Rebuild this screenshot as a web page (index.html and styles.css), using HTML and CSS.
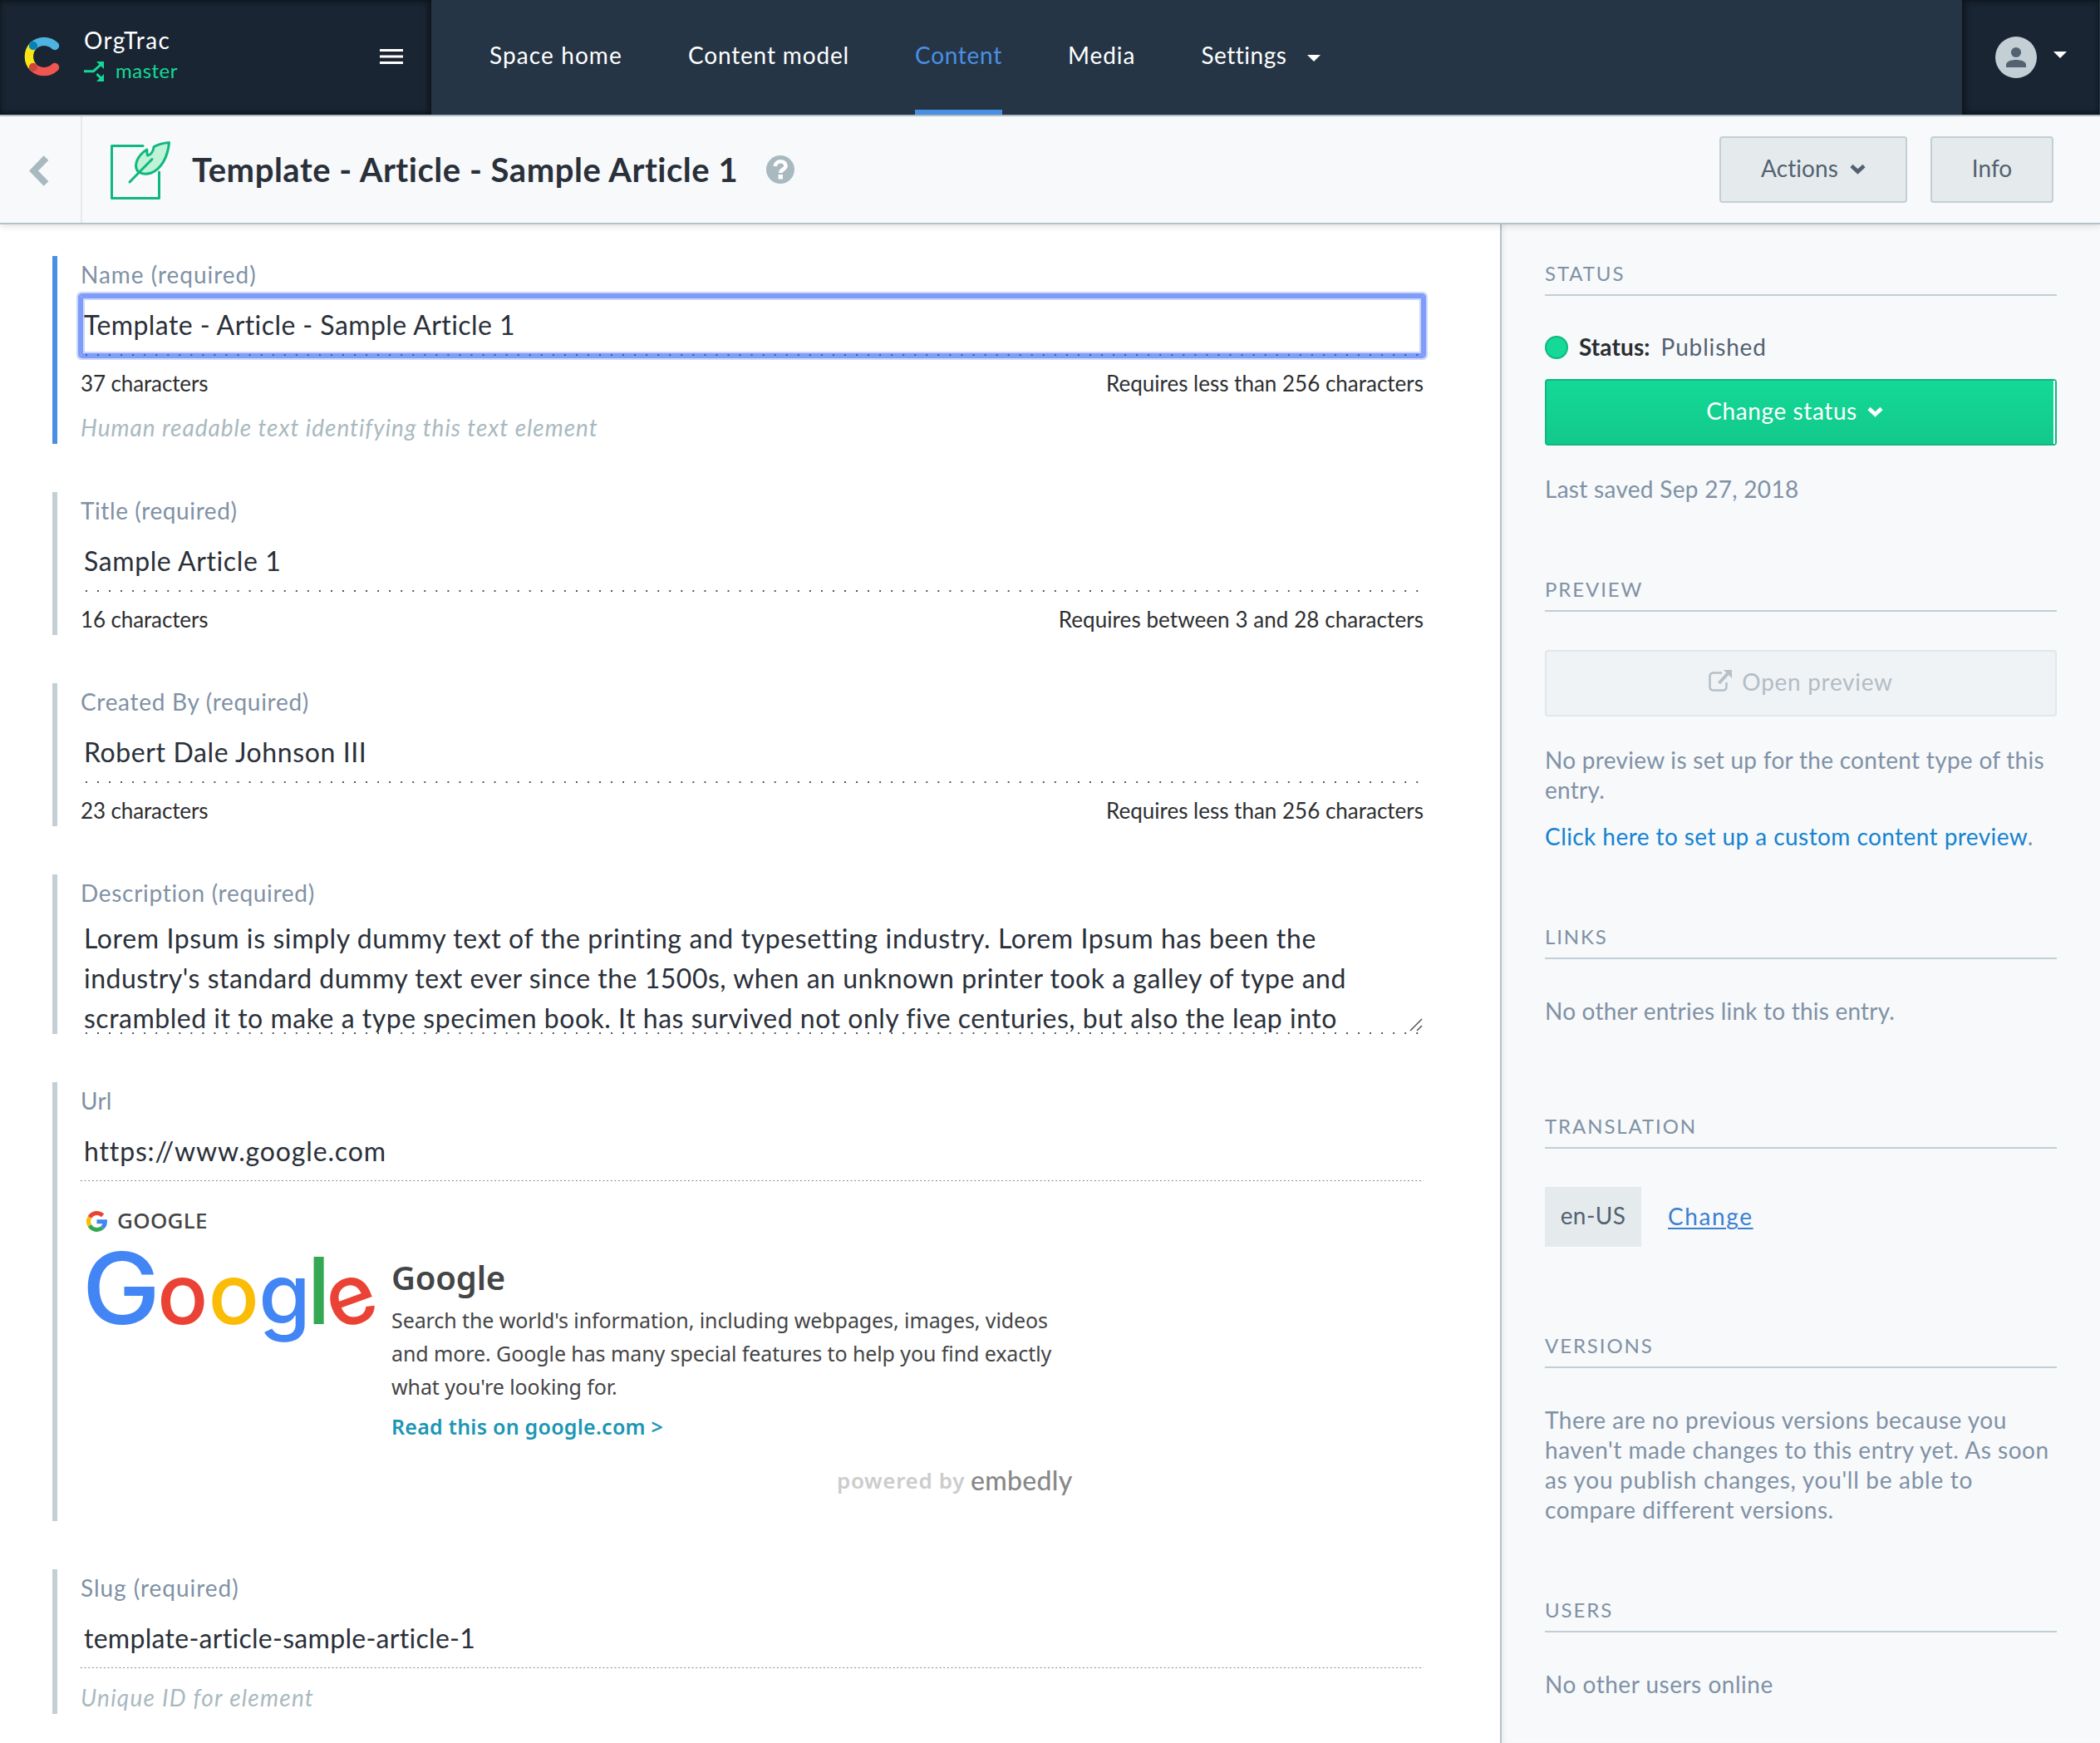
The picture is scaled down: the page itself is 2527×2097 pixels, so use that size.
FILE: index.html
```html
<!DOCTYPE html>
<html lang="en">
<head>
<meta charset="utf-8">
<title>Template - Article - Sample Article 1</title>
<link rel="stylesheet" href="styles.css">
</head>
<body>
<header class="topbar">
  <div class="brand">
    <svg class="brand-logo" width="46" height="52" viewBox="27 42 46 52" fill="none" stroke-width="10.4" stroke-linecap="round">
      <path d="M40 55A19 19 0 0 0 40 81" stroke="#fae51a"/>
      <path d="M40 55A19 19 0 0 1 66 55" stroke="#4fb3e2"/>
      <path d="M40 81A19 19 0 0 0 66 81" stroke="#f0564f"/>
      <circle cx="40" cy="55" r="5.1" fill="#0681b6"/>
      <circle cx="40" cy="81" r="5.1" fill="#cd4739"/>
    </svg>
    <div class="org">
      <div class="org-name">OrgTrac</div>
      <div class="org-env">
        <svg width="26" height="26" viewBox="100 73 26 26"><path d="M101 85.7H112.5L121 78M116.5 89L121.5 94" fill="none" stroke="#14d997" stroke-width="3"/><path d="M116 74H125V83ZM125 89V98H116Z" fill="#14d997"/></svg>
        <span>master</span>
      </div>
    </div>
    <svg class="burger" width="28" height="18" viewBox="0 0 28 18" fill="#fff"><path d="M0 0H28V3H0ZM0 7.5H28V10.5H0ZM0 15H28V18H0Z"/></svg>
  </div>
  <nav class="nav">
    <a class="nav-item ls-11">Space home</a>
    <a class="nav-item ls-09">Content model</a>
    <a class="nav-item nav-active ls-07">Content</a>
    <a class="nav-item ls-10">Media</a>
    <a class="nav-item ls-05">Settings<svg class="nav-caret" width="16" height="8" viewBox="0 0 16 8"><path d="M0 0H16L8 8Z" fill="#fff"/></svg></a>
  </nav>
  <div class="account">
    <svg width="50" height="50" viewBox="0 0 50 50"><circle cx="25" cy="25" r="25" fill="#c3cfd5"/><circle cx="25" cy="19" r="6.1" fill="#536171"/><path d="M13 37V34C13 30 19 28 25 28S37 30 37 34V37Z" fill="#536171"/></svg>
    <svg class="account-caret" width="16" height="8" viewBox="0 0 16 8"><path d="M0 0H16L8 8Z" fill="#fff"/></svg>
  </div>
</header>

<div class="titlebar">
  <div class="back"><svg width="26" height="40" viewBox="0 0 26 40"><path d="M20.5 4L5.5 19.500L20.5 35" fill="none" stroke="#a9b9c0" stroke-width="8" stroke-linejoin="miter"/></svg></div>
  <svg class="entry-icon" width="80" height="80" viewBox="130 165 80 80" fill="none" stroke="#0eb87f" stroke-width="3" stroke-linecap="round" stroke-linejoin="round">
    <path d="M172 175.5H134.5V238.5H191.5V207"/>
    <path d="M203.5 171.5C197 172 190 174 185.2 176.5C184.5 181 182 186.5 177.5 187C176.5 185 177 182 176.8 180C168 185 162 195 164 202.5C166 209 174 210.5 182 208C194 203 202 189 203.5 171.5Z" fill="#bff2d6"/>
    <path d="M156 219L183 191.5"/>
  </svg>
  <h1>Template - Article - Sample Article 1</h1>
  <svg class="help" width="34" height="34" viewBox="0 0 34 34"><circle cx="17" cy="17" r="17" fill="#a9b9c0"/><path d="M11 13C11 5.500 23.500 5.500 23.500 12.500C23.500 17 17.500 16.500 17.300 21" fill="none" stroke="#fff" stroke-width="4.600"/><path d="M14.600 23H20V28.500H14.600Z" fill="#fff"/></svg>
  <button class="btn btn-actions ls-01">Actions<svg width="19" height="13" viewBox="0 0 19 13"><path d="M2 2.500L9.500 9.500L17 2.500" fill="none" stroke="#536171" stroke-width="4.600"/></svg></button>
  <button class="btn btn-info">Info</button>
</div>

<div class="page">
  <main class="form">
    <section class="field field-active">
      <div class="label ls-10">Name (required)</div>
      <div class="input input-focus"><div class="value ls-04">Template - Article - Sample Article 1</div><div class="dots"></div></div>
      <div class="counter"><span class="ls-n1">37 characters</span><span>Requires less than 256 characters</span></div>
      <div class="hint ls-10">Human readable text identifying this text element</div>
    </section>
    <section class="field">
      <div class="label ls-06">Title (required)</div>
      <div class="input"><div class="value ls-06">Sample Article 1</div><div class="dots"></div></div>
      <div class="counter"><span class="ls-n1">16 characters</span><span class="ls-01">Requires between 3 and 28 characters</span></div>
    </section>
    <section class="field">
      <div class="label ls-07">Created By (required)</div>
      <div class="input"><div class="value ls-06">Robert Dale Johnson III</div><div class="dots"></div></div>
      <div class="counter"><span class="ls-n1">23 characters</span><span>Requires less than 256 characters</span></div>
    </section>
    <section class="field">
      <div class="label ls-07">Description (required)</div>
      <div class="textarea">
        <div class="textarea-body">
          <div class="ls-06">Lorem Ipsum is simply dummy text of the printing and typesetting industry. Lorem Ipsum has been the</div>
          <div class="ls-05">industry's standard dummy text ever since the 1500s, when an unknown printer took a galley of type and</div>
          <div class="ls-05">scrambled it to make a type specimen book. It has survived not only five centuries, but also the leap into</div>
        </div>
        <div class="dots"></div>
        <svg class="grip" width="16" height="16" viewBox="0 0 16 16"><path d="M1 15L15 1M9 15L15 9" stroke="#555" stroke-width="1.500"/></svg>
      </div>
    </section>
    <section class="field">
      <div class="label ls-02">Url</div>
      <div class="input input-fine"><div class="value ls-09">https://www.google.com</div><div class="fine-dots"></div></div>
      <div class="embed">
        <div class="embed-source">
          <svg width="25" height="25" viewBox="0 0 25 25" fill="none" stroke-width="5"><path d="M3.900 7.500A10 10 0 0 1 19.600 5.400" stroke="#ea4335"/><path d="M3.900 17.500A10 10 0 0 1 3.900 7.500" stroke="#fbbc05"/><path d="M19 20.100A10 10 0 0 1 3.900 17.500" stroke="#34a853"/><path d="M12.500 12.700H22.400C22.400 16 21 18.500 19 20.100" stroke="#4285f4"/></svg>
          <span>GOOGLE</span>
        </div>
        <div class="embed-card">
          <div class="wordmark"><span class="wm-cap">G</span><span class="wm-o wm-red">o</span><span class="wm-o wm-yellow">o</span><span class="wm-g">g</span><span class="wm-l">l</span><span class="wm-e">e</span></div>
          <div class="embed-text">
            <div class="embed-title">Google</div>
            <p>Search the world's information, including webpages, images, videos<br>and more. Google has many special features to help you find exactly<br>what you're looking for.</p>
            <a class="embed-link">Read this on google.com &gt;</a>
          </div>
        </div>
        <div class="embed-foot"><span class="powered">powered by</span><span class="embedly">embedly</span></div>
      </div>
    </section>
    <section class="field">
      <div class="label ls-10">Slug (required)</div>
      <div class="input input-fine"><div class="value ls-03">template-article-sample-article-1</div><div class="fine-dots"></div></div>
      <div class="hint ls-12">Unique ID for element</div>
    </section>
  </main>

  <aside class="sidebar">
    <section>
      <h2>Status</h2>
      <div class="status-row"><span class="status-dot"></span><b>Status:</b><span class="status-value ls-09">Published</span></div>
      <button class="btn-status"><span class="btn-status-main ls-06">Change status<svg width="19" height="13" viewBox="0 0 19 13"><path d="M2 2.500L9.500 9.500L17 2.500" fill="none" stroke="#fff" stroke-width="4.600"/></svg></span></button>
      <p class="after-button ls-03">Last saved Sep 27, 2018</p>
    </section>
    <section>
      <h2>Preview</h2>
      <button class="btn-preview ls-07"><svg width="28" height="26" viewBox="0 0 28 26"><path d="M16 3.500H6Q1.500 3.500 1.500 8V20Q1.500 24.500 6 24.500H17Q21.500 24.500 21.500 20V15" fill="none" stroke="#b7bfc7" stroke-width="2.500"/><path d="M12.500 16L23 4.500" stroke="#b7bfc7" stroke-width="4"/><path d="M18 0H28V10Z" fill="#b7bfc7"/></svg>Open preview</button>
      <p class="after-button ls-03">No preview is set up for the content type of this entry.</p>
      <p class="preview-link ls-04"><a>Click here to set up a custom content preview</a>.</p>
    </section>
    <section class="links">
      <h2>Links</h2>
      <p class="after-heading ls-02">No other entries link to this entry.</p>
    </section>
    <section class="translation">
      <h2>Translation</h2>
      <div class="locale-row"><span class="locale ls-04">en-US</span><a class="locale-change">Change</a></div>
    </section>
    <section>
      <h2>Versions</h2>
      <p class="after-heading ls-05">There are no previous versions because you<br>haven't made changes to this entry yet. As soon<br><span class="ls-07">as you publish changes, you'll be able to</span><br>compare different versions.</p>
    </section>
    <section>
      <h2>Users</h2>
      <p class="after-heading ls-05">No other users online</p>
    </section>
  </aside>
</div>
</body>
</html>
```
FILE: styles.css
```css
* { box-sizing: border-box; }

body {
  margin: 0;
  width: 2527px;
  height: 2097px;
  overflow: hidden;
  background: #fff;
  font: 400 28px/36px Lato, "Liberation Sans", sans-serif;
  color: #2a3039;
}

svg { display: block; flex: none; }
p, h1, h2 { margin: 0; font-weight: 400; }
button { font: inherit; padding: 0; cursor: pointer; }

/* letter spacing steps */
.ls-n1 { letter-spacing: -0.12px; }
.ls-01 { letter-spacing: 0.07px; }
.ls-02 { letter-spacing: 0.21px; }
.ls-03 { letter-spacing: 0.29px; }
.ls-04 { letter-spacing: 0.43px; }
.ls-05 { letter-spacing: 0.51px; }
.ls-06 { letter-spacing: 0.6px; }
.ls-07 { letter-spacing: 0.7px; }
.ls-09 { letter-spacing: 0.85px; }
.ls-10 { letter-spacing: 0.97px; }
.ls-11 { letter-spacing: 1.1px; }
.ls-12 { letter-spacing: 1.25px; }

/* top bar */
.topbar {
  display: flex;
  height: 140px;
  background: #253545;
  border-bottom: 2px solid #b4c3ca;
}
.brand {
  display: flex;
  width: 519px;
  padding-left: 27px;
  background: #192532;
  box-shadow: inset -3px 0 10px rgba(0, 0, 0, .45), inset 0 0 6px rgba(0, 0, 0, .3);
}
.brand-logo { margin-top: 42px; }
.org { width: 356px; margin-left: 28px; padding-top: 30px; }
.org-name { color: #fff; letter-spacing: 1.4px; }
.org-env {
  display: flex;
  height: 38px;
  margin-left: -1px;
  color: #14d997;
  font-size: 24px;
  line-height: 38px;
  letter-spacing: .5px;
}
.org-env svg { margin-top: 7px; }
.org-env span { margin-left: 13px; }
.burger { margin-top: 59px; }
.nav { display: flex; flex: 1; padding-left: 70px; gap: 79px; }
.nav-item {
  display: flex;
  height: 138px;
  line-height: 132px;
  color: #fff;
}
.nav-item.nav-active { color: #4a90e2; border-bottom: 6px solid #4a90e2; }
.nav-caret { margin: 66px 0 0 25px; }
.account {
  display: flex;
  width: 165px;
  margin-right: 1px;
  padding-left: 40px;
  background: #192532;
  box-shadow: inset 3px 0 10px rgba(0, 0, 0, .45), inset 0 0 6px rgba(0, 0, 0, .3);
}
.account svg { margin-top: 44px; }
.account .account-caret { margin: 62px 0 0 20px; }

/* title bar */
.titlebar {
  position: relative;
  z-index: 1;
  display: flex;
  height: 130px;
  background: #f7f9fb;
  border-bottom: 2px solid #b4c3ca;
  box-shadow: 0 2px 8px rgba(0, 0, 0, .12);
}
.back { width: 99px; padding: 46px 0 0 35px; border-right: 2px solid #e5ebed; }
.entry-icon { margin: 25px 0 0 31px; }
h1 { margin-left: 21px; font-size: 40px; line-height: 128px; font-weight: 700; letter-spacing: .53px; }
.help { margin: 47px auto 0 34px; }
.btn {
  display: flex;
  justify-content: center;
  height: 80px;
  margin-top: 24px;
  border: 2px solid #c3cfd5;
  border-radius: 4px;
  background: #e5ebed;
  color: #536171;
  line-height: 72px;
}
.btn-actions { width: 226px; margin-right: 28px; }
.btn-actions svg { margin: 31px 0 0 14px; }
.btn-info { width: 148px; margin-right: 56px; }

/* entry form */
.page { display: flex; height: 1827px; }
.form {
  display: flex;
  flex-direction: column;
  width: 1805px;
  padding: 38px 92px 0 63px;
  gap: 58px;
}
.field { padding-left: 28px; border-left: 6px solid #c3cfd5; }
.field-active { border-left-color: #4a90e2; }
.label { height: 42px; line-height: 44px; color: #8091a5; }
.input { height: 72px; margin-top: 6px; font-size: 32px; }
.value { height: 70px; padding-left: 4px; line-height: 69px; }
.input-focus {
  border-radius: 2px;
  box-shadow: 0 0 0 3px #7d9df8, 0 0 0 5px #cbd6fa, inset 0 0 0 3px #7d9df8, inset 0 0 0 5px #cbd6fa;
}
.dots {
  height: 2px;
  margin: 0 6px 0 6px;
  background: linear-gradient(90deg, #4a505a 2px, transparent 2px) 0 0 / 14.05px 2px repeat-x;
}
.input-focus .dots { background-image: linear-gradient(90deg, #3459b5 2px, transparent 2px); }
.counter {
  display: flex;
  justify-content: space-between;
  height: 52px;
  padding-top: 13px;
  font-size: 26px;
  line-height: 40px;
  color: #2d2f31;
}
.hint { height: 42px; margin-top: 12px; line-height: 44px; font-style: italic; color: #a9b9c0; }
.textarea { position: relative; padding-top: 11px; font-size: 32px; line-height: 48px; }
.textarea-body { height: 137px; padding-left: 4px; overflow: hidden; white-space: nowrap; }
.grip { position: absolute; right: 1px; bottom: 3px; }
.fine-dots {
  height: 1px;
  background: linear-gradient(90deg, #6a6f76 1px, #d5d5d5 2px, transparent 2px) 0 0 / 4.67px 1px repeat-x;
}

/* link preview card */
.embed {
  height: 408px;
  padding-top: 26px;
  font-family: "Noto Sans", "Open Sans", sans-serif;
  color: #444546;
}
.embed-source { display: flex; height: 40px; padding-left: 7px; font-size: 26px; line-height: 40px; font-weight: 500; }
.embed-source svg { margin-top: 9px; }
.embed-source span { margin-left: 12px; letter-spacing: .3px; }
.embed-card { display: flex; height: 273px; }
.wordmark {
  display: flex;
  align-items: baseline;
  width: 374px;
  height: 130px;
  padding: 2px 0 0 6px;
  font: 500 101px/120px Inter, sans-serif;
  color: #4285f4;
}
.wordmark span { display: flex; justify-content: center; height: 120px; }
.wordmark .wm-cap { width: 86px; font-size: 119px; transform: scaleX(1.06); }
.wm-o { width: 61.5px; }
.wm-g { width: 61px; }
.wordmark .wm-red { color: #ea4335; }
.wordmark .wm-yellow { color: #fbbc05; }
.wordmark .wm-l { width: 21px; color: #34a853; font-size: 112px; }
.wordmark .wm-e { width: 57px; color: #ea4335; transform: rotate(-20deg); transform-origin: 50% 68px; }
.embed-title { margin-top: 23px; font-size: 40px; line-height: 52px; font-weight: 600; letter-spacing: -.2px; }
.embed-text p { margin-top: 5px; font-size: 25px; line-height: 40px; white-space: nowrap; letter-spacing: -.09px; }
.embed-link { display: block; margin-top: 8px; font-size: 25px; line-height: 40px; font-weight: 600; color: #1b96b4; letter-spacing: .25px; }
.embed-foot { display: flex; padding-left: 910px; line-height: 40px; }
.powered { width: 161px; font-size: 26px; font-weight: 600; color: #ccc; letter-spacing: .65px; }
.embedly { font-family: Lato, sans-serif; font-size: 32px; font-weight: 500; color: #888; letter-spacing: .3px; }

/* sidebar */
.sidebar {
  width: 722px;
  padding: 41px 52px 0;
  border-left: 2px solid #b4c3ca;
  background: #f7f9fb;
  box-shadow: inset 5px 0 5px -2px rgba(0, 0, 0, .05);
  color: #8091a5;
}
.sidebar section { margin-bottom: 85px; }
.sidebar .links { margin-bottom: 103px; }
.sidebar .translation { margin-bottom: 101px; }
.sidebar h2 {
  height: 45px;
  border-bottom: 2px solid #c0cfd5;
  font-size: 24px;
  line-height: 35px;
  letter-spacing: 1.9px;
  text-transform: uppercase;
}
.status-row { display: flex; height: 34px; margin-top: 44px; line-height: 35px; }
.status-dot {
  width: 28px;
  height: 28px;
  margin: 4px 13px 0 0;
  border: 2px solid #0eb87f;
  border-radius: 50%;
  background: #14d997;
}
.status-row b { color: #2a2d30; letter-spacing: .1px; }
.status-value { margin-left: 13px; color: #536171; }
.btn-status {
  display: block;
  width: 616px;
  height: 80px;
  margin-top: 22px;
  border: 2px solid #0eb87f;
  border-radius: 4px;
  background: linear-gradient(#14d997, #12c98b);
  color: #fff;
}
.btn-status-main {
  display: flex;
  justify-content: center;
  height: 76px;
  padding-right: 13px;
  border-right: 2px solid #fff;
  line-height: 72px;
}
.btn-status svg { margin: 31px 0 0 12px; }
.after-button { margin-top: 34px; }
.btn-preview {
  display: flex;
  justify-content: center;
  width: 616px;
  height: 80px;
  margin-top: 46px;
  border: 2px solid #e1e7ea;
  border-radius: 4px;
  background: #eff3f5;
  color: #b4bcc5;
  line-height: 72px;
}
.btn-preview svg { margin: 22px 12px 0 0; }
.preview-link { margin-top: 20px; }
.preview-link a { color: #1683d0; }
.after-heading { margin-top: 44px; white-space: nowrap; }
.locale-row { display: flex; height: 72px; margin-top: 46px; line-height: 69px; }
.locale { width: 116px; background: #e5ebed; text-align: center; color: #536171; }
.locale-change { margin-left: 32px; color: #3c80cf; letter-spacing: 1.6px; line-height: 71px; text-decoration: underline; text-decoration-thickness: 2px; text-underline-offset: 3px; }
```
